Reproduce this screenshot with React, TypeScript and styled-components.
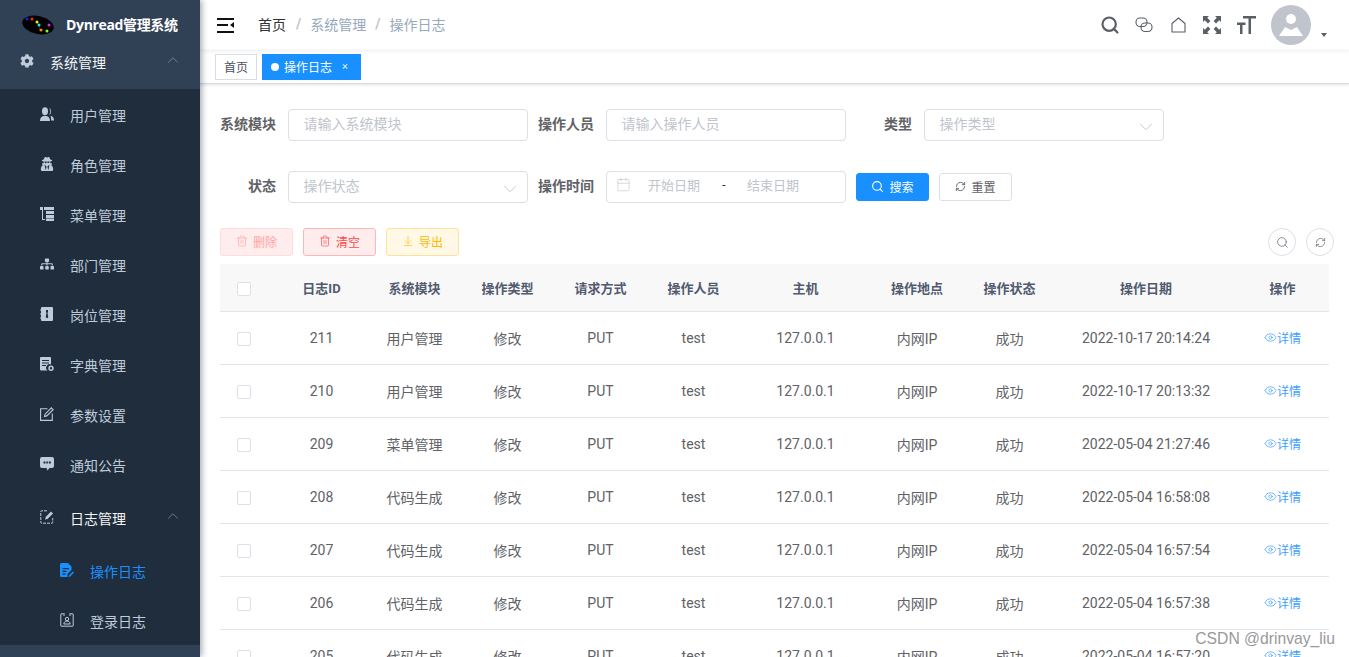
import React, { ReactNode } from "react";
import styled, { createGlobalStyle } from "styled-components";
import { ArrowDownToLine, Calendar, ChevronDown, ChevronUp, Eye, RefreshCw, Search, Trash2 } from "lucide-react";
import { FaCog, FaSitemap, FaUserSecret } from "react-icons/fa";

const fontStack = `Roboto, "Noto Sans CJK SC", sans-serif`;
const primary = "#1890ff";
const columns = "55px repeat(5, 93px) 131px 92px 93px 180px 93px";

const GlobalStyle = createGlobalStyle`
  html, body { margin: 0; height: 100%; overflow: hidden; }
  body { font-family: ${fontStack}; font-size: 14px; color: #606266; background: #fff; }
  * { box-sizing: border-box; }
`;

const Svg = ({ children }: { children: ReactNode }) => (
  <svg width={14} height={14} viewBox="0 0 14 14" fill="currentColor">
    {children}
  </svg>
);

const PeoplesIcon = () => (
  <Svg>
    <ellipse cx="5" cy="4.2" rx="3" ry="4" />
    <path d="M0 14c0-3 1.500-4.500 3.500-5h3c2 .5 3.500 2 3.500 5z" />
    <path d="M9 .5a3 4 0 0 1 0 7.600c.8-1 1.200-2.400 1.200-3.800S9.800 1.500 9 .5zM10.500 8.800c2.200.5 3.500 2.200 3.500 4.700h-2.800c0-2-.2-3.400-.7-4.700z" />
  </Svg>
);
const TreeTableIcon = () => (
  <Svg>
    <path d="M0 0h3v3H0zM4 0h10v3H4zM2 3h1v9h2v1H2zM6 4h8v3H6zM6 8h8v3H6zM6 11.500h8V14H6z" />
  </Svg>
);
const PostIcon = () => (
  <Svg>
    <path fillRule="evenodd" d="M2 0h10a1 1 0 0 1 1 1v12a1 1 0 0 1-1 1H2a1 1 0 0 1-1-1v-1.500H0v-1h1V7.500H0v-1h1V3.500H0v-1h1V1a1 1 0 0 1 1-1zm4 3v2l.5 1-.8 4L7 11.500 8.300 10l-.8-4 .5-1V3z" />
  </Svg>
);
const DictIcon = () => (
  <Svg>
    <path fillRule="evenodd" d="M1 0h9a1 1 0 0 1 1 1v6.500a3.500 3.500 0 0 0-3.500 6H1a1 1 0 0 1-1-1V1a1 1 0 0 1 1-1zm1 3v1h7V3zm0 2.500v1h7v-1zM2 8v1h4V8z" />
    <path fillRule="evenodd" d="M11 8.500a2.700 2.700 0 1 1 0 5.400 2.700 2.700 0 0 1 0-5.400zm0 1.500a1.200 1.200 0 1 0 0 2.400 1.200 1.200 0 0 0 0-2.400z" />
  </Svg>
);
const EditIcon = () => (
  <svg width={14} height={14} viewBox="0 0 14 14" fill="none" stroke="currentColor" strokeWidth="1.100">
    <path d="M7.500 1.700H.6v11.700h11.700V6.500" />
    <path d="M4.500 9.500l.6-2.300L11.300.9l1.800 1.800-6.300 6.200z" />
  </svg>
);
const MessageIcon = () => (
  <Svg>
    <path fillRule="evenodd" d="M2 0h10a2 2 0 0 1 2 2v7a2 2 0 0 1-2 2H9.500L7.500 13.500 6.500 11H2a2 2 0 0 1-2-2V2a2 2 0 0 1 2-2zm1.500 4.500v2h2v-2zm2.800 0v2h1.600v-2zm2.500 0v2h2v-2z" />
  </Svg>
);
const FormIcon = () => (
  <svg width={14} height={14} viewBox="0 0 14 14" fill="none" stroke="currentColor">
    <path d="M7 .8H1.500a.7.7 0 0 0-.7.700v11a.7.7 0 0 0 .7.700h10.500a.7.7 0 0 0 .7-.7V8" strokeDasharray="3 1" />
    <path d="M5 9.500l.7-2.500L11 1.500l2 2L7.500 9z" fill="currentColor" stroke="none" />
  </svg>
);
const LogIcon = () => (
  <Svg>
    <path fillRule="evenodd" d="M1.500 0H8l3.500 3.500V7L7.500 11v3h-6A1.500 1.500 0 0 1 0 12.500v-11A1.500 1.500 0 0 1 1.500 0zM2.500 5v1.300h6.500V5zm0 2.700V9h4V7.700zm0 2.700v1.300h3v-1.300z" />
    <path d="M9 12.500l3.800-4 1.200 1.100-3.800 4L8.500 14z" />
  </Svg>
);
const LoginIcon = () => (
  <svg width={14} height={14} viewBox="0 0 14 14" fill="none" stroke="currentColor">
    <path d="M3.500.8H1.200a.4.4 0 0 0-.4.4v11.600a.4.4 0 0 0 .4.4h11.600a.4.4 0 0 0 .4-.4V1.200a.4.4 0 0 0-.4-.4h-2.300" />
    <path d="M4 0v3M10 0v3" />
    <circle cx="7" cy="6" r="1.700" />
    <path d="M3.800 11c.3-2 1.500-3 3.200-3s2.900 1 3.200 3z" />
  </svg>
);

type MenuEntry = { label: string; icon: ReactNode; level: number; open?: boolean; active?: boolean };

const menu: MenuEntry[] = [
  { label: "用户管理", icon: <PeoplesIcon />, level: 1 },
  { label: "角色管理", icon: <FaUserSecret size={14} />, level: 1 },
  { label: "菜单管理", icon: <TreeTableIcon />, level: 1 },
  { label: "部门管理", icon: <FaSitemap size={14} />, level: 1 },
  { label: "岗位管理", icon: <PostIcon />, level: 1 },
  { label: "字典管理", icon: <DictIcon />, level: 1 },
  { label: "参数设置", icon: <EditIcon />, level: 1 },
  { label: "通知公告", icon: <MessageIcon />, level: 1 },
  { label: "日志管理", icon: <FormIcon />, level: 1, open: true },
  { label: "操作日志", icon: <LogIcon />, level: 2, active: true },
  { label: "登录日志", icon: <LoginIcon />, level: 2 },
];

const logs = [
  ["211", "用户管理", "2022-10-17 20:14:24"],
  ["210", "用户管理", "2022-10-17 20:13:32"],
  ["209", "菜单管理", "2022-05-04 21:27:46"],
  ["208", "代码生成", "2022-05-04 16:58:08"],
  ["207", "代码生成", "2022-05-04 16:57:54"],
  ["206", "代码生成", "2022-05-04 16:57:38"],
  ["205", "代码生成", "2022-05-04 16:57:20"],
];

const headers = ["日志ID", "系统模块", "操作类型", "请求方式", "操作人员", "主机", "操作地点", "操作状态", "操作日期", "操作"];

function App() {
  return (
    <Page>
      <GlobalStyle />
      <Sidebar>
        <LogoRow>
          <svg width={34} height={22} viewBox="0 0 34 22">
            <ellipse cx="17" cy="11" rx="16" ry="9" transform="rotate(12 17 11)" fill="#000" />
            <path d="M16 8l2 3 1 5h6" fill="none" stroke="#335" strokeWidth=".6" />
            <circle cx="6" cy="5" r="1.500" fill="#1a1aff" />
            <circle cx="11" cy="5" r="1.500" fill="#f22" />
            <circle cx="16" cy="8" r="1.500" fill="#ee0" />
            <circle cx="18" cy="11" r="1.500" fill="#1ee" />
            <circle cx="28" cy="11" r="1.500" fill="#e2e" />
            <circle cx="20" cy="16" r="1.500" fill="#f80" />
            <circle cx="26" cy="17" r="1.500" fill="#8f2" />
          </svg>
          <LogoTitle>Dynread管理系统</LogoTitle>
        </LogoRow>
        <RootTitle>
          <MenuIcon>
            <FaCog size={14} />
          </MenuIcon>
          <MenuLabel>系统管理</MenuLabel>
          <Chevron>
            <ChevronUp size={18} strokeWidth={1} />
          </Chevron>
        </RootTitle>
        <SubMenu>
          {menu.map((item) => (
            <MenuRow key={item.label} $level={item.level} $active={item.active} $open={item.open}>
              <MenuIcon $active={item.active}>{item.icon}</MenuIcon>
              <MenuLabel>{item.label}</MenuLabel>
              {item.open && (
                <Chevron>
                  <ChevronUp size={18} strokeWidth={1} />
                </Chevron>
              )}
            </MenuRow>
          ))}
        </SubMenu>
      </Sidebar>

      <Main>
        <Navbar>
          <Hamburger>
            <svg width={17} height={15} viewBox="0 0 17 15" fill="#111">
              <path d="M0 0h17v2H0zM0 6h11v2H0zM0 13h17v2H0zM17 4v6l-4-3z" />
            </svg>
          </Hamburger>
          <Crumb $current>首页</Crumb>
          <CrumbSep>/</CrumbSep>
          <Crumb>系统管理</Crumb>
          <CrumbSep>/</CrumbSep>
          <Crumb>操作日志</Crumb>
          <NavTools>
            <NavIcon>
              <Search size={20} strokeWidth={2.6} />
            </NavIcon>
            <NavIcon>
              <svg width={18} height={16} viewBox="0 0 18 16" fill="none" stroke="#5a5e66" strokeWidth="1.100">
                <rect x="1" y="1" width="11" height="8.500" rx="4" />
                <rect x="6" y="6" width="11" height="8.500" rx="4" />
              </svg>
            </NavIcon>
            <NavIcon>
              <svg width={15} height={16} viewBox="0 0 15 16" fill="none" stroke="#5a5e66" strokeWidth="1.100">
                <path d="M7.500 1L1 6.500V15h13V6.500z" strokeLinejoin="round" />
              </svg>
            </NavIcon>
            <NavIcon>
              <svg width={18} height={18} viewBox="0 0 18 18" fill="#5a5e66">
                <path d="M0 0h6L4.200 1.800 7.400 5 5 7.400 1.800 4.200 0 6zM18 0v6l-1.800-1.800L13 7.400 10.600 5l3.200-3.200L12 0zM0 18v-6l1.800 1.800L5 10.600 7.400 13l-3.200 3.200L6 18zM18 18h-6l1.800-1.800-3.200-3.200 2.400-2.400 3.200 3.200L18 12z" />
              </svg>
            </NavIcon>
            <NavIcon>
              <svg width={19} height={18} viewBox="0 0 19 18" fill="#5a5e66">
                <path d="M6 0h13v2.500h-5V18h-2.500V2.500H6zM0 6.500h8.500V9h-3v9H3V9H0z" />
              </svg>
            </NavIcon>
          </NavTools>
          <Avatar>
            <svg width={26} height={26} viewBox="0 0 26 26" fill="#fff">
              <circle cx="13" cy="7" r="5" />
              <path d="M1 24l6-9 6 3 6-3 6 9z" />
            </svg>
          </Avatar>
          <Caret />
        </Navbar>

        <TagsBar>
          <Tag>首页</Tag>
          <Tag $active>
            <TagDot />
            操作日志
            <TagClose>×</TagClose>
          </Tag>
        </TagsBar>

        <Content>
          <FilterRow>
            <Field>
              <FieldLabel>系统模块</FieldLabel>
              <TextBox>请输入系统模块</TextBox>
            </Field>
            <Field>
              <FieldLabel>操作人员</FieldLabel>
              <TextBox>请输入操作人员</TextBox>
            </Field>
            <Field>
              <FieldLabel>类型</FieldLabel>
              <TextBox>
                操作类型
                <SelectArrow>
                  <ChevronDown size={22} strokeWidth={1} />
                </SelectArrow>
              </TextBox>
            </Field>
          </FilterRow>
          <FilterRow>
            <Field>
              <FieldLabel>状态</FieldLabel>
              <TextBox>
                操作状态
                <SelectArrow>
                  <ChevronDown size={22} strokeWidth={1} />
                </SelectArrow>
              </TextBox>
            </Field>
            <Field>
              <FieldLabel>操作时间</FieldLabel>
              <DateBox>
                <Calendar size={15} strokeWidth={1} />
                <DateText>开始日期</DateText>
                <DateDash>-</DateDash>
                <DateText>结束日期</DateText>
              </DateBox>
            </Field>
            <Btn $tone="primary">
              <Search size={13} />
              搜索
            </Btn>
            <Btn $tone="plain">
              <RefreshCw size={11} />
              重置
            </Btn>
          </FilterRow>

          <Toolbar>
            <Btn $tone="dangerOff">
              <Trash2 size={12} strokeWidth={1.3} />
              删除
            </Btn>
            <Btn $tone="danger">
              <Trash2 size={12} strokeWidth={1.3} />
              清空
            </Btn>
            <Btn $tone="warning">
              <ArrowDownToLine size={12} strokeWidth={1.3} />
              导出
            </Btn>
            <RightTools>
              <RoundBtn>
                <Search size={13} strokeWidth={1.3} />
              </RoundBtn>
              <RoundBtn>
                <RefreshCw size={11} strokeWidth={1.5} />
              </RoundBtn>
            </RightTools>
          </Toolbar>

          <HeadRow>
            <CheckCell>
              <CheckBox />
            </CheckCell>
            {headers.map((h) => (
              <HeadCell key={h}>{h}</HeadCell>
            ))}
          </HeadRow>
          {logs.map(([id, title, time]) => (
            <BodyRow key={id}>
              <CheckCell>
                <CheckBox />
              </CheckCell>
              <BodyCell>{id}</BodyCell>
              <BodyCell>{title}</BodyCell>
              <BodyCell>修改</BodyCell>
              <BodyCell>PUT</BodyCell>
              <BodyCell>test</BodyCell>
              <BodyCell>127.0.0.1</BodyCell>
              <BodyCell>内网IP</BodyCell>
              <BodyCell>成功</BodyCell>
              <BodyCell>{time}</BodyCell>
              <DetailCell>
                <Eye size={13} strokeWidth={1.3} />
                详情
              </DetailCell>
            </BodyRow>
          ))}
        </Content>
      </Main>
      <Watermark>CSDN @drinvay_liu</Watermark>
    </Page>
  );
}

const Page = styled.div`
  display: flex;
  height: 100vh;
  overflow: hidden;
`;

const Sidebar = styled.aside`
  flex: 0 0 200px;
  height: 100%;
  background: #304156;
  box-shadow: 2px 0 6px rgba(0, 21, 41, 0.35);
  z-index: 2;
  overflow: hidden;
`;

const LogoRow = styled.div`
  display: flex;
  align-items: center;
  height: 50px;
  padding-left: 21px;
`;

const LogoTitle = styled.h1`
  margin: -2px 0 0 11px;
  color: #fff;
  font-family: "Open Sans", "Noto Sans CJK SC", sans-serif;
  font-size: 14px;
  font-weight: 700;
  letter-spacing: -0.35px;
  white-space: nowrap;
`;

const RootTitle = styled.div`
  display: flex;
  align-items: center;
  height: 39px;
  padding: 0 18px 15px 20px;
  color: #f4f4f5;
`;

const SubMenu = styled.nav`
  background: #1f2d3d;
`;

const MenuRow = styled.div<{ $level: number; $active?: boolean; $open?: boolean }>`
  display: flex;
  align-items: center;
  height: ${(p) => (p.$open ? 56 : 50)}px;
  padding: 2px 18px 0 ${(p) => 20 + p.$level * 20}px;
  color: ${(p) => (p.$active ? primary : p.$open ? "#f4f4f5" : "#bfcbd9")};
`;

const MenuIcon = styled.span<{ $active?: boolean }>`
  display: flex;
  flex: 0 0 14px;
  margin: 0 16px -3px 0;
  transform: translateY(-3px);
  color: ${(p) => (p.$active ? primary : "#bfcbd9")};
`;

const MenuLabel = styled.span`
  font-size: 14px;
`;

const Chevron = styled.span`
  display: flex;
  margin-left: auto;
  margin-top: -4px;
  color: #8491a3;
`;

const Main = styled.main`
  flex: 1;
  min-width: 0;
  height: 100%;
  overflow: hidden;
`;

const Navbar = styled.header`
  display: flex;
  align-items: center;
  height: 50px;
  padding-left: 17px;
  box-shadow: 0 1px 4px rgba(0, 21, 41, 0.08);
`;

const Hamburger = styled.span`
  display: flex;
  margin-right: 24px;
`;

const Crumb = styled.span<{ $current?: boolean }>`
  margin-right: ${(p) => (p.$current ? 1 : 0)}px;
  padding-bottom: 2px;
  color: ${(p) => (p.$current ? "#303133" : "#97a8be")};
`;

const CrumbSep = styled.span`
  margin: 0 9px;
  padding-bottom: 2px;
  color: #c0c4cc;
  font-weight: 700;
`;

const NavTools = styled.div`
  display: flex;
  align-items: center;
  margin: 0 0 1px auto;
`;

const NavIcon = styled.span`
  display: flex;
  justify-content: center;
  width: 34px;
  color: #5a5e66;
`;

const Avatar = styled.span`
  display: flex;
  align-items: center;
  justify-content: center;
  width: 40px;
  height: 40px;
  margin-left: 8px;
  border-radius: 50%;
  background: #c0c4cc;
`;

const Caret = styled.span`
  align-self: flex-end;
  margin: 0 22px 13px 10px;
  border-left: 3.5px solid transparent;
  border-right: 3.5px solid transparent;
  border-top: 4px solid #5a5e66;
`;

const TagsBar = styled.div`
  display: flex;
  align-items: center;
  gap: 5px;
  height: 34px;
  padding-left: 15px;
  border-bottom: 1px solid #d8dce5;
  box-shadow: 0 1px 3px rgba(0, 0, 0, 0.12);
`;

const Tag = styled.span<{ $active?: boolean }>`
  display: flex;
  align-items: center;
  height: 26px;
  padding: 0 8px;
  border: 1px solid ${(p) => (p.$active ? primary : "#d8dce5")};
  background: ${(p) => (p.$active ? primary : "#fff")};
  color: ${(p) => (p.$active ? "#fff" : "#495060")};
  font-size: 12px;
`;

const TagDot = styled.i`
  width: 8px;
  height: 8px;
  margin-right: 5px;
  border-radius: 50%;
  background: #fff;
`;

const TagClose = styled.i`
  margin: 0 4px 0 10px;
  font-style: normal;
  font-size: 11px;
  opacity: 0.85;
`;

const Content = styled.section`
  padding: 25px 20px 0;
`;

const FilterRow = styled.div`
  display: flex;
  align-items: center;
  gap: 10px;
  height: 32px;
  margin-bottom: 30px;

  & + & {
    margin-bottom: 25px;
  }
`;

const Field = styled.div`
  display: flex;
  align-items: center;
`;

const FieldLabel = styled.label`
  width: 68px;
  padding: 0 12px 5px 0;
  text-align: right;
  color: #606266;
  font-weight: 700;
  font-size: 14px;
`;

const TextBox = styled.div`
  display: flex;
  align-items: center;
  justify-content: space-between;
  width: 240px;
  height: 32px;
  padding: 0 6px 5px 14.5px;
  border: 1px solid #dcdfe6;
  border-radius: 4px;
  color: #c0c4cc;
  font-size: 14px;
`;

const SelectArrow = styled.span`
  display: flex;
  margin-top: 8px;
  color: #c0c4cc;
`;

const DateBox = styled(TextBox)`
  justify-content: flex-start;
  padding-left: 9px;
  font-size: 13px;

  svg {
    flex: none;
  }
`;

const DateText = styled.span`
  width: 53px;
  margin-left: 17px;
  white-space: nowrap;
`;

const DateDash = styled.span`
  width: 4px;
  margin-left: 21px;
  margin-right: 4px;
  color: #303133;
`;

const tones = {
  primary: { bg: primary, border: primary, color: "#fff" },
  plain: { bg: "#fff", border: "#dcdfe6", color: "#606266" },
  dangerOff: { bg: "#ffeded", border: "#ffdbdb", color: "#ffa4a4" },
  danger: { bg: "#ffeded", border: "#ffb6b6", color: "#ff4949" },
  warning: { bg: "#fff8e6", border: "#ffe399", color: "#ffba00" },
};

const Btn = styled.button<{ $tone: keyof typeof tones }>`
  display: inline-flex;
  align-items: center;
  justify-content: center;
  gap: 5px;
  width: 73px;
  height: 28px;
  padding: 0 0 2px;
  border: 1px solid ${(p) => tones[p.$tone].border};
  border-radius: 3px;
  background: ${(p) => tones[p.$tone].bg};
  color: ${(p) => tones[p.$tone].color};
  font-family: inherit;
  font-size: 12px;
`;

const Toolbar = styled.div`
  display: flex;
  align-items: center;
  gap: 10px;
  height: 28px;
  margin-bottom: 8px;
`;

const RightTools = styled.div`
  display: flex;
  gap: 10px;
  margin: 0 -5px 0 auto;
`;

const RoundBtn = styled.span`
  display: flex;
  align-items: center;
  justify-content: center;
  width: 28px;
  height: 28px;
  border: 1px solid #dcdfe6;
  border-radius: 50%;
  color: #606266;
`;

const HeadRow = styled.div`
  display: grid;
  grid-template-columns: ${columns};
  align-items: center;
  height: 48px;
  background: #f8f8f9;
  border-bottom: 1px solid #dfe6ec;
`;

const BodyRow = styled(HeadRow)`
  height: 53px;
  background: #fff;
`;

const CheckCell = styled.div`
  display: flex;
  padding: 2px 0 0 17px;
`;

const CheckBox = styled.span`
  width: 14px;
  height: 14px;
  border: 1px solid #dcdfe6;
  border-radius: 2px;
  background: #fff;
`;

const HeadCell = styled.div`
  text-align: center;
  color: #515a6e;
  font-weight: 700;
  font-size: 13px;
`;

const BodyCell = styled.div`
  text-align: center;
  color: #606266;
  font-size: 14px;
  white-space: nowrap;
`;

const DetailCell = styled.div`
  display: flex;
  align-items: center;
  justify-content: center;
  margin-top: -1px;
  color: #409eff;
  font-size: 12px;
`;

const Watermark = styled.div`
  position: absolute;
  right: 14px;
  bottom: 9px;
  z-index: 3;
  color: #999;
  font-family: "Liberation Sans", sans-serif;
  font-size: 15.7px;
`;

export default App;
